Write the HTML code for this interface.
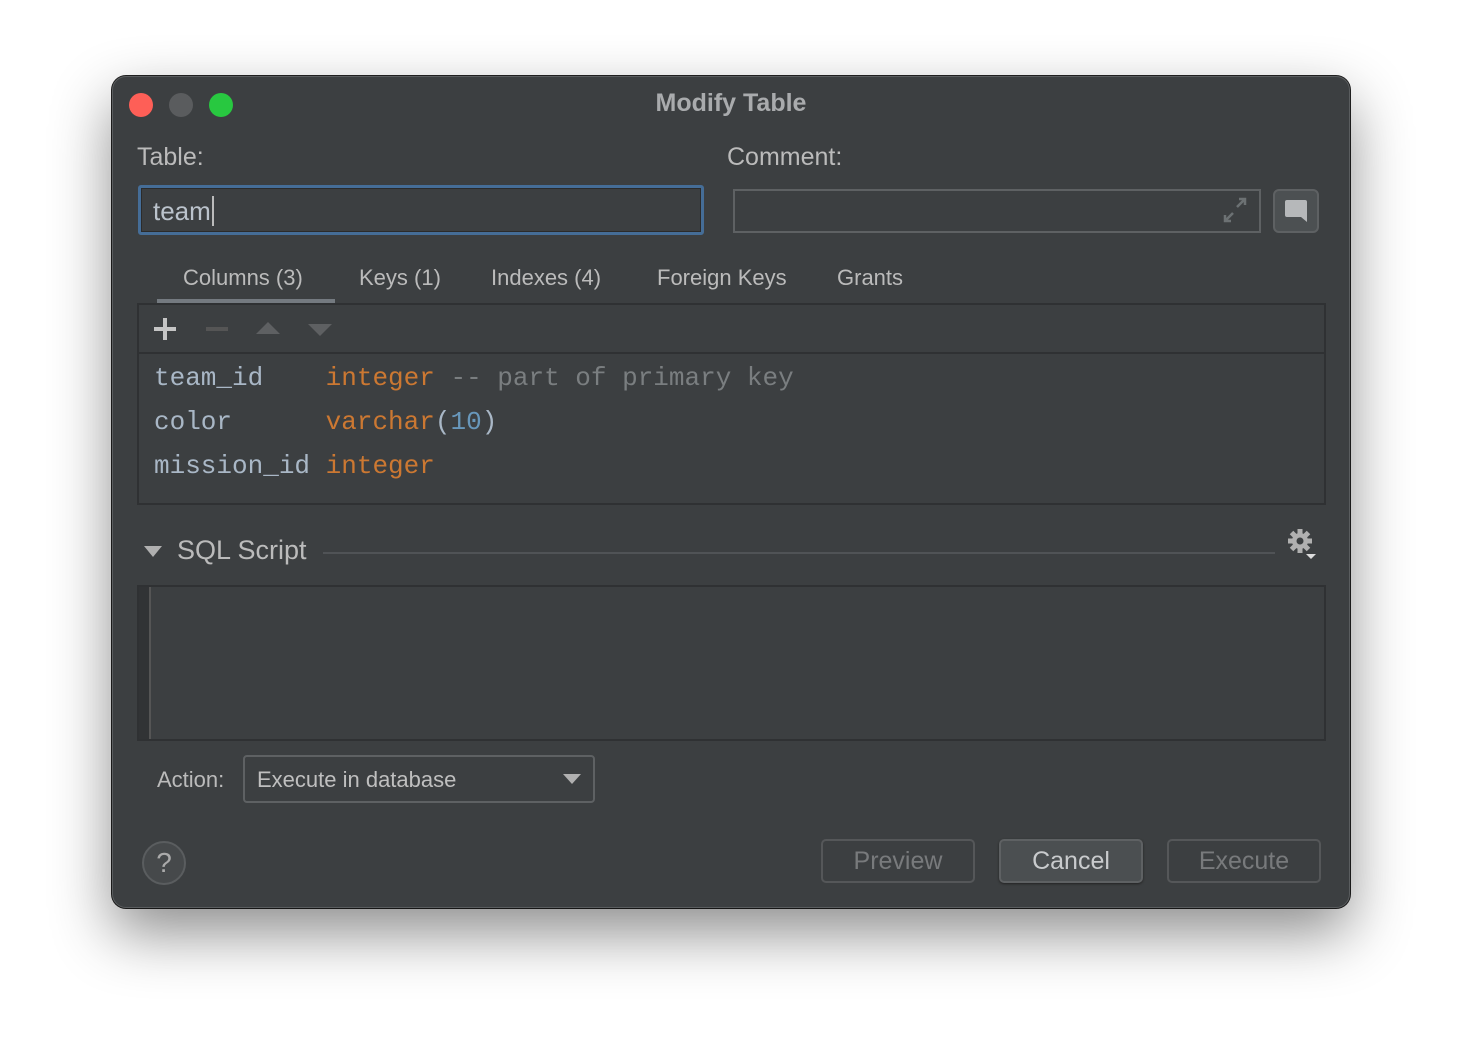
<!DOCTYPE html>
<html><head><meta charset="utf-8"><style>
body{margin:0;width:1462px;height:1056px;background:#fff;position:relative;overflow:hidden;font-family:"Liberation Sans",sans-serif;}
.win{position:absolute;left:112px;top:76px;width:1236px;height:830px;background:#3c3f41;border:1px solid #5a5d5f;border-radius:14px;box-shadow:0 25px 60px rgba(0,0,0,.45),0 0 0 1px #222;}
.a{position:absolute;}
.t{color:#bbbbbb;font-size:22px;}
.mono{font-family:"Liberation Mono",monospace;font-size:26px;white-space:pre;}
.btn{position:absolute;top:762px;height:44px;border:2px solid #555759;border-radius:5px;box-sizing:border-box;text-align:center;line-height:40px;font-size:25px;color:#787a7c;}
</style></head><body>
<div class="win">
 <div class="a" style="left:16px;top:16px;width:24px;height:24px;border-radius:50%;background:#fe5f57"></div>
 <div class="a" style="left:56px;top:16px;width:24px;height:24px;border-radius:50%;background:#5a5c5e"></div>
 <div class="a" style="left:96px;top:16px;width:24px;height:24px;border-radius:50%;background:#28c840"></div>
 <div class="a" style="left:0;width:1236px;top:12px;text-align:center;font-size:25px;font-weight:bold;color:#a9abad">Modify Table</div>

 <div class="a t" style="left:24px;top:66px;font-size:25px">Table:</div>
 <div class="a t" style="left:614px;top:66px;font-size:25px">Comment:</div>
 <div class="a" style="left:25px;top:108px;width:566px;height:50px;border:3px solid #456d97;border-radius:3px;box-sizing:border-box;background:#3c3f41;box-shadow:inset 0 0 0 1px #2b2b2b"></div>
 <div class="a t" style="left:40px;top:119px;font-size:26px;color:#bbc3cc">team<span style="border-left:2px solid #bbb;margin-left:1px"></span></div>
 <div class="a" style="left:620px;top:112px;width:528px;height:44px;border:2px solid #5e6163;box-sizing:border-box"></div>
 <svg class="a" style="left:1108px;top:118px" width="28" height="30" viewBox="0 0 28 30"><path d="M16 12 L24 4 M18 4h6v6 M12 18 L4 26 M4 20v6h6" stroke="#6c7173" stroke-width="2.5" fill="none"/></svg>
 <div class="a" style="left:1160px;top:112px;width:46px;height:44px;border:2px solid #5e6163;border-radius:6px;box-sizing:border-box;background:#4c5052"></div>
 <svg class="a" style="left:1170px;top:120px" width="28" height="28"><path d="M4 3h18a2 2 0 0 1 2 2v20l-6-5H4a2 2 0 0 1-2-2V5a2 2 0 0 1 2-2z" fill="#b6b8ba"/></svg>

 <div class="a t" style="left:70px;top:188px">Columns (3)</div>
 <div class="a t" style="left:246px;top:188px">Keys (1)</div>
 <div class="a t" style="left:378px;top:188px">Indexes (4)</div>
 <div class="a t" style="left:544px;top:188px">Foreign Keys</div>
 <div class="a t" style="left:724px;top:188px">Grants</div>
 <div class="a" style="left:44px;top:222px;width:178px;height:5px;background:#747a80"></div>

 <div class="a" style="left:24px;top:226px;width:1189px;height:202px;border:2px solid #2f3133;box-sizing:border-box"></div>
 <div class="a" style="left:26px;top:275px;width:1186px;height:2px;background:#2f3133"></div>
 <div class="a" style="left:41px;top:250px;width:22px;height:4px;background:#c5c5c5"></div>
 <div class="a" style="left:50px;top:241px;width:4px;height:22px;background:#c5c5c5"></div>
 <div class="a" style="left:93px;top:250px;width:22px;height:4px;background:#555"></div>
 <svg class="a" style="left:142px;top:244px" width="26" height="14"><path d="M1 13L13 1L25 13z" fill="#5e6062"/></svg>
 <svg class="a" style="left:194px;top:246px" width="26" height="14"><path d="M1 1L13 13L25 1z" fill="#5e6062"/></svg>

 <div class="a mono" style="left:41px;top:286px;color:#a9b7c6">team_id    <span style="color:#cc7832">integer</span><span style="color:#7a7e80"> -- part of primary key</span></div>
 <div class="a mono" style="left:41px;top:330px;color:#a9b7c6">color      <span style="color:#cc7832">varchar</span>(<span style="color:#6897bb">10</span>)</div>
 <div class="a mono" style="left:41px;top:374px;color:#a9b7c6">mission_id <span style="color:#cc7832">integer</span></div>

 <svg class="a" style="left:30px;top:468px" width="20" height="14"><path d="M1 1h18L10 12z" fill="#b0b0b0"/></svg>
 <div class="a t" style="left:64px;top:458px;font-size:27px">SQL Script</div>
 <div class="a" style="left:210px;top:475px;width:952px;height:2px;background:#505356"></div>
 <svg class="a" style="left:1172px;top:450px" width="36" height="34" viewBox="0 0 36 34"><g fill="#b0b0b0"><circle cx="15" cy="14" r="8"/><rect x="12.5" y="2" width="5" height="24"/><rect x="3" y="11.5" width="24" height="5"/><rect x="12.5" y="2" width="5" height="24" transform="rotate(45 15 14)"/><rect x="12.5" y="2" width="5" height="24" transform="rotate(-45 15 14)"/></g><circle cx="15" cy="14" r="3.5" fill="#3c3f41"/><path d="M21 27h10l-5 5z" fill="#ddd"/></svg>

 <div class="a" style="left:24px;top:508px;width:1189px;height:156px;border:2px solid #2f3133;box-sizing:border-box"></div>
 <div class="a" style="left:26px;top:510px;width:10px;height:152px;background:#313335"></div>
 <div class="a" style="left:36px;top:510px;width:2px;height:152px;background:#555"></div>

 <div class="a t" style="left:44px;top:690px">Action:</div>
 <div class="a" style="left:130px;top:678px;width:352px;height:48px;border:2px solid #5e6163;border-radius:4px;box-sizing:border-box"></div>
 <div class="a t" style="left:144px;top:690px;color:#bfbfbf">Execute in database</div>
 <svg class="a" style="left:449px;top:696px" width="20" height="12"><path d="M1 1h18L10 11z" fill="#b0b0b0"/></svg>

 <div class="a" style="left:29px;top:764px;width:44px;height:44px;border-radius:50%;border:2px solid #5a5d5f;box-sizing:border-box;background:#46494b;color:#aaa;font-size:28px;text-align:center;line-height:40px">?</div>
 <div class="btn" style="left:708px;width:154px">Preview</div>
 <div class="btn" style="left:886px;width:144px;background:#4b4f51;border-color:#5e6163;color:#c9cbcd;box-shadow:0 1px 2px #222">Cancel</div>
 <div class="btn" style="left:1054px;width:154px">Execute</div>
</div>
</body></html>
